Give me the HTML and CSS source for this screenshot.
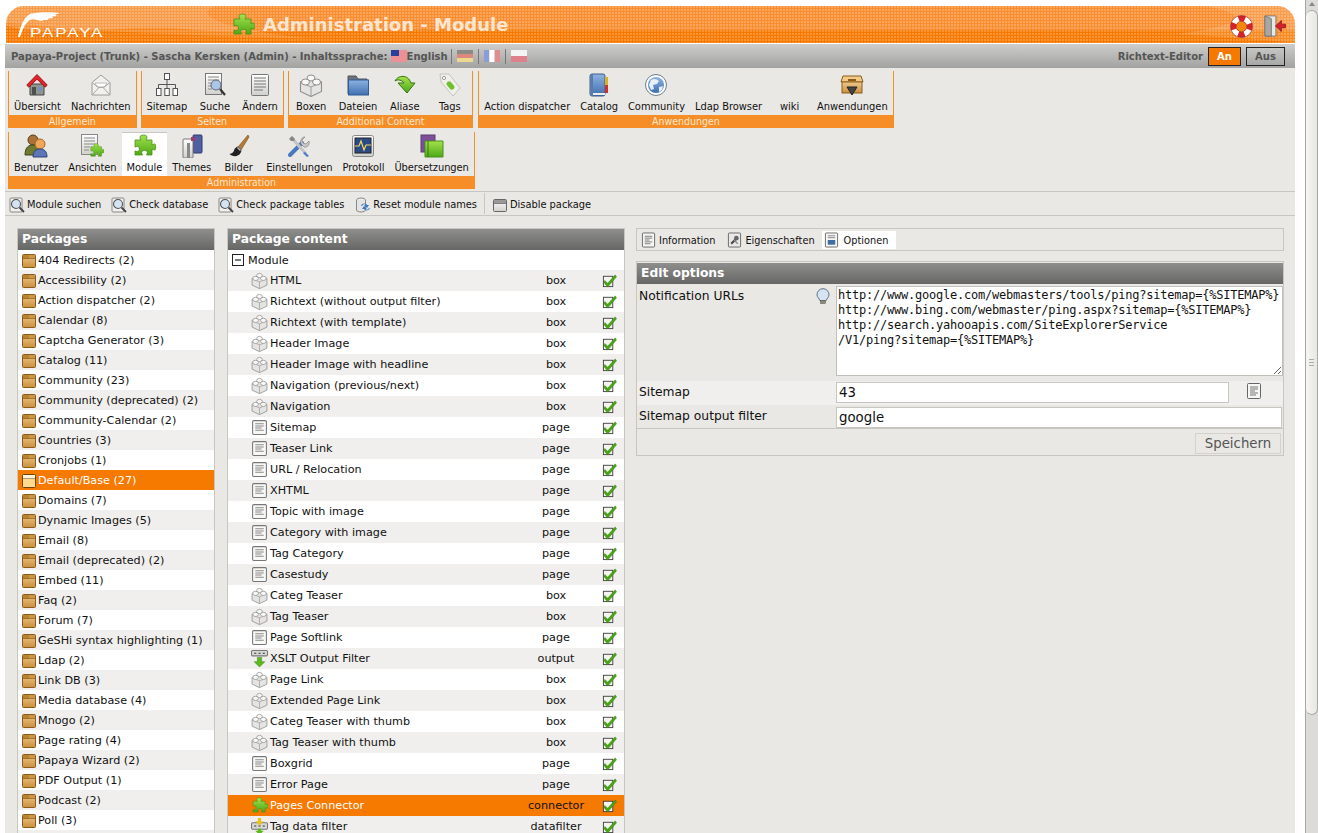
FILE: index.html
```html
<!DOCTYPE html>
<html lang="de">
<head>
<meta charset="utf-8">
<title>Administration - Module</title>
<link rel="stylesheet" href="styles.css">
</head>
<body>
<svg class="defs" aria-hidden="true">
<defs>
<linearGradient id="gGreen" x1="0" y1="0" x2="0" y2="1"><stop offset="0" stop-color="#a4e24e"/><stop offset="1" stop-color="#4ea816"/></linearGradient>
<linearGradient id="gPkg" x1="0" y1="0" x2="0" y2="1"><stop offset="0" stop-color="#efc98c"/><stop offset="1" stop-color="#c98f3e"/></linearGradient>
<linearGradient id="gGrey" x1="0" y1="0" x2="0" y2="1"><stop offset="0" stop-color="#ffffff"/><stop offset="1" stop-color="#d0d0cc"/></linearGradient>
<linearGradient id="gBlue" x1="0" y1="0" x2="0" y2="1"><stop offset="0" stop-color="#8db3e2"/><stop offset="1" stop-color="#3f6fb0"/></linearGradient>
<symbol id="puzzle" viewBox="0 0 24 24"><path d="M3 6h6c-.8-1-1-2-1-2.800C8 1.800 9.500 1 11.500 1s3.500.8 3.500 2.200c0 .8-.3 1.800-1 2.800h6v5c1-.7 1.800-1 2.500-1 .9 0 1.500 1.200 1.500 3s-.6 3-1.500 3c-.7 0-1.500-.3-2.500-1v6h-5.500c.6-1 .8-1.800.8-2.500 0-1.300-1.200-2-2.800-2s-2.800.7-2.800 2c0 .7.2 1.500.8 2.500H3v-4c1 .3 1.700.5 2.400.5 1.200 0 2-1 2-2.500s-.8-2.500-2-2.500c-.7 0-1.400.2-2.400.5z" fill="url(#gGreen)" stroke="#4b8f1a" stroke-width=".8"/></symbol>
<symbol id="home" viewBox="0 0 24 24"><path d="M5 11v11h14V11z" fill="#8f958f" stroke="#444"/><rect x="7" y="14" width="4" height="8" fill="#4d504d"/><rect x="13" y="14" width="4" height="4" fill="#7690c0"/><path d="M12 1.500 1.800 12l2 2.200L12 6.200l8.200 8 2-2.200z" fill="#e3242c" stroke="#9a141a" stroke-linejoin="round"/></symbol>
<symbol id="mail" viewBox="0 0 24 24"><path d="M3 9.500 12 2l9 7.500V22H3z" fill="#f2f1ee" stroke="#9a9a96"/><path d="M6 10h12l-2 4H8z" fill="#fff" stroke="#bbb"/><path d="M3.500 21.500 10 14.500h4l6.500 7M3.500 10 10 14.500M20.500 10 14 14.500" fill="none" stroke="#a8a8a4"/></symbol>
<symbol id="sitemap" viewBox="0 0 24 24" fill="#fff" stroke="#555" stroke-width="1"><rect x="9.500" y=".5" width="5" height="6"/><path d="M12 6.500v5M3.500 15v-3.500h17V15M12 11.500V15" fill="none"/><rect x="1.500" y="15.500" width="4.500" height="7"/><rect x="9.800" y="15.500" width="4.500" height="7"/><rect x="18" y="15.500" width="4.500" height="7"/></symbol>
<symbol id="pagesearch" viewBox="0 0 24 24"><rect x="2.500" y=".5" width="16" height="21" fill="url(#gGrey)" stroke="#777"/><path d="M5 4h11M5 7h11M5 10h4M5 13h4M5 16h4" stroke="#888"/><circle cx="13" cy="12" r="5" fill="#a9c6e8" stroke="#667"/><path d="m17 16 5 6" stroke="#333" stroke-width="2.200"/></symbol>
<symbol id="doc" viewBox="0 0 24 24"><rect x="3.500" y="1.500" width="17" height="21" rx="1" fill="url(#gGrey)" stroke="#777"/><path d="M6 5h12M6 8h12M6 11h12M6 14h12M6 17h9" stroke="#777"/></symbol>
<symbol id="lego" viewBox="0 0 24 24"><path d="M12 5 1.500 9v9.500L12 23.500l10.500-5V9z" fill="#e4e4e2" stroke="#8e8e8a" stroke-width="1.100"/><path d="M1.500 9.500 12 14l10.500-4.500M12 14v9.500" fill="none" stroke="#9c9c98"/><ellipse cx="12" cy="5" rx="4" ry="3" fill="#f8f8f8" stroke="#8e8e8a"/><ellipse cx="6.500" cy="9" rx="4" ry="3" fill="#f8f8f8" stroke="#8e8e8a"/><ellipse cx="17.500" cy="9" rx="4" ry="3" fill="#f8f8f8" stroke="#8e8e8a"/></symbol>
<symbol id="folder" viewBox="0 0 24 24"><path d="M2 3h8l2 3h9v15H2z" fill="#6b7380" stroke="#555"/><rect x="2.500" y="7" width="20" height="15" fill="url(#gBlue)" stroke="#2f5a96"/></symbol>
<symbol id="alias" viewBox="0 0 24 24"><path d="M2 8c3-6 13-7 16 2h4l-8 10-9-10h6C9 7 5 6 2 8z" fill="url(#gGreen)" stroke="#33730e"/></symbol>
<symbol id="tag" viewBox="0 0 24 24"><path d="M2 1h9l11 14-7 8L3 9z" fill="#f0efe9" stroke="#c4c4be"/><circle cx="6" cy="5" r="1.600" fill="#fff" stroke="#999"/><rect x="8" y="10" width="9" height="5" rx="2" transform="rotate(50 12.500 12.500)" fill="#6cc22c"/></symbol>
<symbol id="book" viewBox="0 0 24 24"><rect x="3" y="1" width="15" height="22" rx="2" fill="url(#gBlue)" stroke="#445e86"/><rect x="3" y="1" width="3" height="22" fill="#5b7bab"/><rect x="18" y="4" width="3" height="8" fill="#e0b020"/><rect x="18" y="12" width="3" height="8" fill="#d03030"/><rect x="6" y="20" width="12" height="2" fill="#eee"/></symbol>
<symbol id="globe" viewBox="0 0 24 24"><circle cx="12" cy="12" r="10.500" fill="#fff" stroke="#6c7c92"/><circle cx="12" cy="12" r="8" fill="url(#gBlue)"/><path d="M7 7c3-2 6-1 8 1l-2 3-4 1 1 4-3 1-2-5zM15 14l4-1-1 4-3 2z" fill="#e8eff8"/></symbol>
<symbol id="apps" viewBox="0 0 24 24"><path d="M3 3h18l2 6H1z" fill="#f2cb88" stroke="#8a5c18"/><rect x="2" y="9" width="20" height="11" fill="url(#gPkg)" stroke="#8a5c18"/><rect x="8" y="6" width="8" height="2" fill="#8a5c18"/><path d="M7 14h10l-5 8z" fill="#444" stroke="#222"/></symbol>
<symbol id="users" viewBox="0 0 24 24"><circle cx="9" cy="6" r="5" fill="#a8723a" stroke="#5c3c18"/><path d="M1 21c0-8 4-10 8-10s7 3 7 10z" fill="#6e7a30" stroke="#3c4418"/><circle cx="16" cy="10" r="5" fill="#f0a858" stroke="#a8642a"/><path d="M9 23c0-6 3-8 7-8s7 2 7 8z" fill="#5b77b8" stroke="#2d4478"/></symbol>
<symbol id="viewadd" viewBox="0 0 24 24"><rect x="1.500" y=".5" width="16" height="20" fill="url(#gGrey)" stroke="#888"/><path d="M4 4h11M4 7h11M4 10h11M4 13h6M4 16h5" stroke="#888"/><use href="#puzzle" x="9" y="9" width="15" height="15"/></symbol>
<symbol id="themes" viewBox="0 0 24 24"><rect x="13" y="1" width="9" height="18" rx="1" fill="#4f5f9f" stroke="#2e3a70"/><rect x="3" y="5" width="10" height="19" rx="1" fill="url(#gGrey)" stroke="#777"/><rect x="7" y="9" width="3" height="15" fill="#888"/><rect x="11" y="3" width="4" height="4" fill="#a03a6a"/></symbol>
<symbol id="brush" viewBox="0 0 24 24"><path d="M21 1 11 13l3 3L22 3z" fill="#b47a3a" stroke="#7a4c1c" stroke-width=".6"/><path d="M11 12.500c-2 .5-3.500 2-4 4-.4 2-2 3-4.500 3.500 3 3 9 3 11-1 1-1.500 1-3 .5-3.500z" fill="#222"/><path d="m11 13 3 3-1 1-3-3z" fill="#bbb"/></symbol>
<symbol id="tools" viewBox="0 0 24 24"><path d="m3 21 12-12" stroke="#4a78c0" stroke-width="4" stroke-linecap="round"/><path d="M14 10c-1-3 0-6 3-7l1 0-3 3 1 3 3 1 3-3c1 4-2 7-5 6z" fill="#c8c8c8" stroke="#777" stroke-width=".6"/><path d="m4 3 15 17" stroke="#c4c4c4" stroke-width="3"/><path d="M2 5l3-3 3 3-1 2H4z" fill="#888"/><path d="m18 18 4 4-2 1-4-4z" fill="#4a78c0"/></symbol>
<symbol id="monitor" viewBox="0 0 24 24"><rect x="1.500" y="1.500" width="21" height="21" rx="2" fill="url(#gGrey)" stroke="#888"/><rect x="4" y="4" width="16" height="15" fill="#2b4b86" stroke="#222"/><path d="M4 12h4l2-5 3 9 2-5h5" fill="none" stroke="#f4d860" stroke-width="1.200"/></symbol>
<symbol id="translate" viewBox="0 0 24 24"><rect x="1" y="1" width="14" height="17" fill="#7d4f9a" stroke="#5a3a70"/><path d="M5 7h18v16H5z" fill="url(#gGreen)" stroke="#4b8f1a"/><path d="M8 7v16" stroke="#2f7a0a"/></symbol>
<symbol id="lens" viewBox="0 0 16 16"><rect x="1" y="1" width="12" height="14" rx="1" fill="#f0f0ee" stroke="#888"/><circle cx="7" cy="7" r="4.500" fill="#d4e2f2" stroke="#555" stroke-width="1.100"/><path d="m10.500 10.500 4.500 4.500" stroke="#444" stroke-width="1.800"/></symbol>
<symbol id="reset" viewBox="0 0 16 16"><ellipse cx="6" cy="3" rx="4.500" ry="2" fill="#eee" stroke="#888"/><path d="M1.500 3v10c0 1.200 2 2 4.500 2s4.500-.8 4.500-2V3" fill="#e4e4e2" stroke="#888"/><path d="M6 9c1-3 5-3 6-1h2l-2 3-3-3h2c-1-1-3-1-4 1zM15 11c-1 3-5 3-6 1H7l2-3 3 3h-2c1 1 3 1 4-1z" fill="#3a78c8"/></symbol>
<symbol id="grey-pkg" viewBox="0 0 16 16"><rect x="1.500" y="2.500" width="13" height="12" rx="1" fill="url(#gGrey)" stroke="#666"/><path d="M1.500 6.500h13" stroke="#666"/><rect x="2" y="3" width="12" height="3.500" fill="#999"/></symbol>
<symbol id="pkg" viewBox="0 0 16 16"><rect x="1.500" y="1.500" width="13" height="13" rx="1" fill="url(#gPkg)" stroke="#8a5c18"/><path d="M1.500 5.500h13M8 1.500v4" stroke="#8a5c18"/><rect x="2" y="2" width="6" height="3.500" fill="#b88434"/><rect x="8" y="2" width="6" height="3.500" fill="#c9964a"/></symbol>
<symbol id="pkgopen" viewBox="0 0 16 16"><rect x="1.500" y="1.500" width="13" height="13" rx="1" fill="#ffd98e" stroke="#6a4410"/><path d="M1.500 5.500h13" stroke="#6a4410"/><rect x="2" y="2" width="12" height="3.500" fill="#fff3d8"/></symbol>
<symbol id="page" viewBox="0 0 16 16"><rect x="1.500" y="1.500" width="13" height="13" rx="1" fill="#f8f8f6" stroke="#777"/><path d="M4 4.500h8M4 6.500h8M4 8.500h6M4 10.500h8" stroke="#888"/></symbol>
<symbol id="output" viewBox="0 0 16 16"><rect x=".5" y=".5" width="15" height="5" rx="1" fill="#d8d8d6" stroke="#777"/><path d="M3 3h2M7 3h2M11 3h2" stroke="#333"/><path d="M6 7h4v4h3l-5 5-5-5h3z" fill="#5cb81e" stroke="#3f8a10" stroke-width=".5"/></symbol>
<symbol id="datafilter" viewBox="0 0 16 16"><rect x=".5" y="4.500" width="15" height="6" rx="1" fill="#d8d8d6" stroke="#777"/><path d="M3 7.500h2M7 7.500h2M11 7.500h2" stroke="#333"/><path d="M6.500 0h3v3H12l-4 4-4-4h2.500z" fill="#e8c020"/><path d="M6.500 10h3v2H12l-4 4-4-4h2.500z" fill="#5cb81e"/></symbol>
<symbol id="check" viewBox="0 0 16 16"><rect x="1.500" y="3.500" width="10" height="11" fill="#f4f4f0" stroke="#444"/><path d="M3 8l3 3 8-9 1.500 2-9.500 11-4-5z" fill="#4aa516" stroke="#2e7a06" stroke-width=".5"/></symbol>
<symbol id="minus" viewBox="0 0 12 12"><rect x=".5" y=".5" width="11" height="11" fill="#fff" stroke="#222"/><path d="M3 6h6" stroke="#222" stroke-width="1.200"/></symbol>
<symbol id="tabinfo" viewBox="0 0 16 16"><rect x="1.500" y=".5" width="13" height="15" rx="1" fill="#f6f6f4" stroke="#666"/><path d="M4 4h8M4 6h8M4 8h5M4 10h8M4 12h6" stroke="#777"/></symbol>
<symbol id="tabprops" viewBox="0 0 16 16"><rect x="1.500" y=".5" width="13" height="15" rx="1" fill="#e8e8e6" stroke="#666"/><path d="m4.500 12 5-5" stroke="#444" stroke-width="2.200"/><circle cx="10" cy="6" r="2.500" fill="#666"/><path d="m7.500 8 4 4" stroke="#888" stroke-width="1.500"/></symbol>
<symbol id="tabopts" viewBox="0 0 16 16"><rect x="1.500" y=".5" width="13" height="15" rx="1" fill="#f6f6f4" stroke="#666"/><path d="M4 3.500h8M4 5.500h8" stroke="#888"/><rect x="4" y="8" width="8" height="5" fill="#3f6f9f"/></symbol>
<symbol id="bulb" viewBox="0 0 16 16"><path d="M8 .7a6 6 0 0 0-6 6c0 2.500 2 3.500 3 6h6c1-2.500 3-3.500 3-6a6 6 0 0 0-6-6z" fill="#d6e4f2" stroke="#5a7088"/><rect x="5.500" y="12.500" width="5" height="3" fill="#8a8a70" stroke="#555" stroke-width=".5"/></symbol>
<symbol id="ring" viewBox="0 0 24 24"><circle cx="12" cy="12" r="8.500" fill="none" stroke="#fff" stroke-width="6"/><circle cx="12" cy="12" r="8.500" fill="none" stroke="#d8222a" stroke-width="6" stroke-dasharray="6.700 6.650" stroke-dashoffset="3.300"/><circle cx="12" cy="12" r="11.500" fill="none" stroke="#8a2020" stroke-width=".6"/><circle cx="12" cy="12" r="5.500" fill="#f3860f" stroke="#8a2020" stroke-width=".6"/></symbol>
<symbol id="door" viewBox="0 0 24 24"><path d="M1 1h12v22H1z" fill="#e8e8e4" stroke="#777"/><path d="M1 1l7 3v19H1z" fill="#a8a8a2" stroke="#777"/><path d="M23.500 10H19V6l-6.500 6 6.500 6v-4h4.500z" fill="#d8202a" stroke="#8a1016" stroke-width=".8"/></symbol>
<symbol id="us" viewBox="0 0 16 12"><rect width="16" height="12" fill="#fff"/><path d="M0 1h16M0 3h16M0 5h16M0 7h16M0 9h16M0 11h16" stroke="#d8222a"/><rect width="8" height="6" fill="#2a3f9a"/></symbol>
<symbol id="de" viewBox="0 0 16 12"><rect width="16" height="4" fill="#8b8a86"/><rect y="4" width="16" height="4" fill="#dc8a80"/><rect y="8" width="16" height="4" fill="#ecd890"/></symbol>
<symbol id="fr" viewBox="0 0 16 12"><rect width="5.300" height="12" fill="#8c9cd6"/><rect x="5.300" width="5.400" height="12" fill="#fff"/><rect x="10.700" width="5.300" height="12" fill="#e08c90"/></symbol>
<symbol id="pl" viewBox="0 0 16 12"><rect width="16" height="6" fill="#f4f4f4"/><rect y="6" width="16" height="6" fill="#e0808c"/></symbol>
</defs>
</svg>

<div class="page">
  <header class="top">
    <svg class="swoosh" viewBox="0 0 1289 37" preserveAspectRatio="none" aria-hidden="true"><path d="M0 20C60 34 120 16 190 24 240 28 400 23 560 24H1289V37H0z" fill="#f57800"/><path d="M0 0H210C180 10 230 26 310 33 210 30 70 26 0 16z" fill="#fff" opacity=".12"/><path d="M1289 0H1200C1240 8 1250 18 1170 28 1210 30 1250 33 1289 37z" fill="#fff" opacity=".14"/></svg>
    <div class="logo">
      <svg class="feather" viewBox="0 0 44 28" aria-hidden="true"><path d="M1 26C3 17 6 7 13 3 20 1 34 1 43 2L38 3.500 40 5 35 5.500 36 7 31 7.500 31 9 26 9 25 10 20 9C13 7 9 9 3 26z" fill="#fff"/></svg>
      <span class="logo-text">PAPAYA</span>
    </div>
    <svg class="title-icon"><use href="#puzzle"/></svg>
    <h1 class="title">Administration - Module</h1>
    <div class="top-actions">
      <svg class="ring-icon"><use href="#ring"/></svg>
      <svg class="door-icon"><use href="#door"/></svg>
    </div>
  </header>

  <div class="status">
    <span>Papaya-Project (Trunk) - Sascha Kersken (Admin) - Inhaltssprache:</span>
    <svg class="flag flag-first"><use href="#us"/></svg><span>English</span>
    <i class="flag-sep"></i><svg class="flag"><use href="#de"/></svg>
    <i class="flag-sep"></i><svg class="flag"><use href="#fr"/></svg>
    <i class="flag-sep"></i><svg class="flag"><use href="#pl"/></svg>
    <span class="rte-label">Richtext-Editor</span>
    <span class="rte rte-on">An</span>
    <span class="rte rte-off">Aus</span>
  </div>

  <div class="content">
    <nav class="menu-row">
      <section class="group">
        <div class="btns">
          <a class="btn"><svg class="mi"><use href="#home"/></svg>Übersicht</a>
          <a class="btn"><svg class="mi"><use href="#mail"/></svg>Nachrichten</a>
        </div>
        <div class="group-name">Allgemein</div>
      </section>
      <section class="group">
        <div class="btns">
          <a class="btn"><svg class="mi"><use href="#sitemap"/></svg>Sitemap</a>
          <a class="btn"><svg class="mi"><use href="#pagesearch"/></svg>Suche</a>
          <a class="btn"><svg class="mi"><use href="#doc"/></svg>Ändern</a>
        </div>
        <div class="group-name">Seiten</div>
      </section>
      <section class="group">
        <div class="btns">
          <a class="btn"><svg class="mi"><use href="#lego"/></svg>Boxen</a>
          <a class="btn"><svg class="mi"><use href="#folder"/></svg>Dateien</a>
          <a class="btn"><svg class="mi"><use href="#alias"/></svg>Aliase</a>
          <a class="btn"><svg class="mi"><use href="#tag"/></svg>Tags</a>
        </div>
        <div class="group-name">Additional Content</div>
      </section>
      <section class="group group-apps">
        <div class="btns">
          <a class="btn"><span class="mi"></span>Action dispatcher</a>
          <a class="btn"><svg class="mi"><use href="#book"/></svg>Catalog</a>
          <a class="btn"><svg class="mi"><use href="#globe"/></svg>Community</a>
          <a class="btn"><span class="mi"></span>Ldap Browser</a>
          <a class="btn"><span class="mi"></span>wiki</a>
          <a class="btn"><svg class="mi"><use href="#apps"/></svg>Anwendungen</a>
        </div>
        <div class="group-name">Anwendungen</div>
      </section>
    </nav>
    <nav class="menu-row menu-row-2">
      <section class="group">
        <div class="btns">
          <a class="btn"><svg class="mi"><use href="#users"/></svg>Benutzer</a>
          <a class="btn"><svg class="mi"><use href="#viewadd"/></svg>Ansichten</a>
          <a class="btn btn-active"><svg class="mi"><use href="#puzzle"/></svg>Module</a>
          <a class="btn"><svg class="mi"><use href="#themes"/></svg>Themes</a>
          <a class="btn"><svg class="mi"><use href="#brush"/></svg>Bilder</a>
          <a class="btn"><svg class="mi"><use href="#tools"/></svg>Einstellungen</a>
          <a class="btn"><svg class="mi"><use href="#monitor"/></svg>Protokoll</a>
          <a class="btn"><svg class="mi"><use href="#translate"/></svg>Übersetzungen</a>
        </div>
        <div class="group-name">Administration</div>
      </section>
    </nav>

    <div class="actions">
      <a class="act"><svg class="si"><use href="#lens"/></svg>Module suchen</a>
      <a class="act"><svg class="si"><use href="#lens"/></svg>Check database</a>
      <a class="act"><svg class="si"><use href="#lens"/></svg>Check package tables</a>
      <a class="act act-reset"><svg class="si"><use href="#reset"/></svg>Reset module names</a>
      <i class="act-sep"></i>
      <a class="act"><svg class="si"><use href="#grey-pkg"/></svg>Disable package</a>
    </div>

    <div class="columns">
      <section class="panel col-left">
        <h2 class="panel-head">Packages</h2>
        <ul class="pkg-list">
          <li><svg class="si"><use href="#pkg"/></svg>404 Redirects (2)</li>
          <li><svg class="si"><use href="#pkg"/></svg>Accessibility (2)</li>
          <li><svg class="si"><use href="#pkg"/></svg>Action dispatcher (2)</li>
          <li><svg class="si"><use href="#pkg"/></svg>Calendar (8)</li>
          <li><svg class="si"><use href="#pkg"/></svg>Captcha Generator (3)</li>
          <li><svg class="si"><use href="#pkg"/></svg>Catalog (11)</li>
          <li><svg class="si"><use href="#pkg"/></svg>Community (23)</li>
          <li><svg class="si"><use href="#pkg"/></svg>Community (deprecated) (2)</li>
          <li><svg class="si"><use href="#pkg"/></svg>Community-Calendar (2)</li>
          <li><svg class="si"><use href="#pkg"/></svg>Countries (3)</li>
          <li><svg class="si"><use href="#pkg"/></svg>Cronjobs (1)</li>
          <li class="sel"><svg class="si"><use href="#pkgopen"/></svg>Default/Base (27)</li>
          <li><svg class="si"><use href="#pkg"/></svg>Domains (7)</li>
          <li><svg class="si"><use href="#pkg"/></svg>Dynamic Images (5)</li>
          <li><svg class="si"><use href="#pkg"/></svg>Email (8)</li>
          <li><svg class="si"><use href="#pkg"/></svg>Email (deprecated) (2)</li>
          <li><svg class="si"><use href="#pkg"/></svg>Embed (11)</li>
          <li><svg class="si"><use href="#pkg"/></svg>Faq (2)</li>
          <li><svg class="si"><use href="#pkg"/></svg>Forum (7)</li>
          <li><svg class="si"><use href="#pkg"/></svg>GeSHi syntax highlighting (1)</li>
          <li><svg class="si"><use href="#pkg"/></svg>Ldap (2)</li>
          <li><svg class="si"><use href="#pkg"/></svg>Link DB (3)</li>
          <li><svg class="si"><use href="#pkg"/></svg>Media database (4)</li>
          <li><svg class="si"><use href="#pkg"/></svg>Mnogo (2)</li>
          <li><svg class="si"><use href="#pkg"/></svg>Page rating (4)</li>
          <li><svg class="si"><use href="#pkg"/></svg>Papaya Wizard (2)</li>
          <li><svg class="si"><use href="#pkg"/></svg>PDF Output (1)</li>
          <li><svg class="si"><use href="#pkg"/></svg>Podcast (2)</li>
          <li><svg class="si"><use href="#pkg"/></svg>Poll (3)</li>
          <li></li>
        </ul>
      </section>

      <section class="panel col-mid">
        <h2 class="panel-head">Package content</h2>
        <div class="tree-root"><svg class="minus"><use href="#minus"/></svg>Module</div>
        <ul class="mod-list">
          <li><svg class="mod-ic"><use href="#lego"/></svg><span class="mod-name">HTML</span><span class="mod-type">box</span><svg class="chk"><use href="#check"/></svg></li>
          <li><svg class="mod-ic"><use href="#lego"/></svg><span class="mod-name">Richtext (without output filter)</span><span class="mod-type">box</span><svg class="chk"><use href="#check"/></svg></li>
          <li><svg class="mod-ic"><use href="#lego"/></svg><span class="mod-name">Richtext (with template)</span><span class="mod-type">box</span><svg class="chk"><use href="#check"/></svg></li>
          <li><svg class="mod-ic"><use href="#lego"/></svg><span class="mod-name">Header Image</span><span class="mod-type">box</span><svg class="chk"><use href="#check"/></svg></li>
          <li><svg class="mod-ic"><use href="#lego"/></svg><span class="mod-name">Header Image with headline</span><span class="mod-type">box</span><svg class="chk"><use href="#check"/></svg></li>
          <li><svg class="mod-ic"><use href="#lego"/></svg><span class="mod-name">Navigation (previous/next)</span><span class="mod-type">box</span><svg class="chk"><use href="#check"/></svg></li>
          <li><svg class="mod-ic"><use href="#lego"/></svg><span class="mod-name">Navigation</span><span class="mod-type">box</span><svg class="chk"><use href="#check"/></svg></li>
          <li><svg class="mod-ic"><use href="#page"/></svg><span class="mod-name">Sitemap</span><span class="mod-type">page</span><svg class="chk"><use href="#check"/></svg></li>
          <li><svg class="mod-ic"><use href="#page"/></svg><span class="mod-name">Teaser Link</span><span class="mod-type">page</span><svg class="chk"><use href="#check"/></svg></li>
          <li><svg class="mod-ic"><use href="#page"/></svg><span class="mod-name">URL / Relocation</span><span class="mod-type">page</span><svg class="chk"><use href="#check"/></svg></li>
          <li><svg class="mod-ic"><use href="#page"/></svg><span class="mod-name">XHTML</span><span class="mod-type">page</span><svg class="chk"><use href="#check"/></svg></li>
          <li><svg class="mod-ic"><use href="#page"/></svg><span class="mod-name">Topic with image</span><span class="mod-type">page</span><svg class="chk"><use href="#check"/></svg></li>
          <li><svg class="mod-ic"><use href="#page"/></svg><span class="mod-name">Category with image</span><span class="mod-type">page</span><svg class="chk"><use href="#check"/></svg></li>
          <li><svg class="mod-ic"><use href="#page"/></svg><span class="mod-name">Tag Category</span><span class="mod-type">page</span><svg class="chk"><use href="#check"/></svg></li>
          <li><svg class="mod-ic"><use href="#page"/></svg><span class="mod-name">Casestudy</span><span class="mod-type">page</span><svg class="chk"><use href="#check"/></svg></li>
          <li><svg class="mod-ic"><use href="#lego"/></svg><span class="mod-name">Categ Teaser</span><span class="mod-type">box</span><svg class="chk"><use href="#check"/></svg></li>
          <li><svg class="mod-ic"><use href="#lego"/></svg><span class="mod-name">Tag Teaser</span><span class="mod-type">box</span><svg class="chk"><use href="#check"/></svg></li>
          <li><svg class="mod-ic"><use href="#page"/></svg><span class="mod-name">Page Softlink</span><span class="mod-type">page</span><svg class="chk"><use href="#check"/></svg></li>
          <li><svg class="mod-ic"><use href="#output"/></svg><span class="mod-name">XSLT Output Filter</span><span class="mod-type">output</span><svg class="chk"><use href="#check"/></svg></li>
          <li><svg class="mod-ic"><use href="#lego"/></svg><span class="mod-name">Page Link</span><span class="mod-type">box</span><svg class="chk"><use href="#check"/></svg></li>
          <li><svg class="mod-ic"><use href="#lego"/></svg><span class="mod-name">Extended Page Link</span><span class="mod-type">box</span><svg class="chk"><use href="#check"/></svg></li>
          <li><svg class="mod-ic"><use href="#lego"/></svg><span class="mod-name">Categ Teaser with thumb</span><span class="mod-type">box</span><svg class="chk"><use href="#check"/></svg></li>
          <li><svg class="mod-ic"><use href="#lego"/></svg><span class="mod-name">Tag Teaser with thumb</span><span class="mod-type">box</span><svg class="chk"><use href="#check"/></svg></li>
          <li><svg class="mod-ic"><use href="#page"/></svg><span class="mod-name">Boxgrid</span><span class="mod-type">page</span><svg class="chk"><use href="#check"/></svg></li>
          <li><svg class="mod-ic"><use href="#page"/></svg><span class="mod-name">Error Page</span><span class="mod-type">page</span><svg class="chk"><use href="#check"/></svg></li>
          <li class="sel"><svg class="mod-ic"><use href="#puzzle"/></svg><span class="mod-name">Pages Connector</span><span class="mod-type">connector</span><svg class="chk"><use href="#check"/></svg></li>
          <li><svg class="mod-ic"><use href="#datafilter"/></svg><span class="mod-name">Tag data filter</span><span class="mod-type">datafilter</span><svg class="chk"><use href="#check"/></svg></li>
        </ul>
      </section>

      <div class="col-right">
        <div class="tabs">
          <a class="tab"><svg class="tab-ic"><use href="#tabinfo"/></svg>Information</a>
          <a class="tab"><svg class="tab-ic"><use href="#tabprops"/></svg>Eigenschaften</a>
          <a class="tab tab-active"><svg class="tab-ic"><use href="#tabopts"/></svg>Optionen</a>
        </div>
        <form class="panel opts">
          <h2 class="panel-head">Edit options</h2>
          <div class="field field-ta">
            <label class="field-label">Notification URLs</label>
            <svg class="bulb"><use href="#bulb"/></svg>
            <textarea class="ta" spellcheck="false">http://www.google.com/webmasters/tools/ping?sitemap={%SITEMAP%}
http://www.bing.com/webmaster/ping.aspx?sitemap={%SITEMAP%}
http://search.yahooapis.com/SiteExplorerService
/V1/ping?sitemap={%SITEMAP%}</textarea>
          </div>
          <div class="field field-alt">
            <label class="field-label">Sitemap</label>
            <input class="inp inp-short" value="43">
            <svg class="pick"><use href="#tabinfo"/></svg>
          </div>
          <div class="field field-last">
            <label class="field-label">Sitemap output filter</label>
            <input class="inp inp-long" value="google">
          </div>
          <div class="submit-row"><button type="button" class="save">Speichern</button></div>
        </form>
      </div>
    </div>
  </div>
</div>

<div class="vscroll" aria-hidden="true">
  <div class="vs-up"></div>
  <div class="vs-thumb"><span class="vs-grip"></span></div>
</div>
</body>
</html>
```

FILE: styles.css
```css
* { box-sizing: border-box; }
html, body { margin: 0; height: 833px; overflow: hidden; background: #fff; }
body { display: flex; font: 11.2px "DejaVu Sans", sans-serif; color: #111; }
ul { list-style: none; margin: 0; padding: 0; }
svg { display: block; flex: none; }
.defs { position: absolute; width: 0; height: 0; }

.page { width: 1305px; height: 833px; padding: 6px 10px 0 5px; overflow: hidden; flex: none; }

/* header */
.top { position: relative; margin-left: 1px; height: 37px; display: flex; align-items: center; overflow: hidden;
  border-radius: 18px 18px 0 0; background: #f88e30; }
.top::after { content: ""; position: absolute; inset: 0;
  background: radial-gradient(circle at 1px 1px, rgba(255,255,255,.22) .7px, transparent 1px) 0 0 / 3px 3px; }
.swoosh { position: absolute; inset: 0; width: 100%; height: 100%; }
.logo { position: relative; z-index: 1; width: 224px; height: 37px; padding: 20px 0 0 24px; }
.feather { position: absolute; left: 11px; top: 5px; width: 44px; height: 28px; }
.logo-text { display: block; transform: scaleX(1.3); transform-origin: left top; font: 13px/14px "Liberation Sans", sans-serif; letter-spacing: 1.5px; color: #fff; }
.title-icon { position: relative; z-index: 1; width: 24px; height: 24px; margin: 0 8px 0 1px; }
.title { position: relative; z-index: 1; margin: 0; font: bold 18px "DejaVu Sans", sans-serif; color: #fde6d0; }
.top-actions { position: relative; z-index: 1; margin-left: auto; padding: 3px 9px 0 0; display: flex; gap: 11px; }
.ring-icon { width: 23px; height: 23px; }
.door-icon { width: 22px; height: 22px; }

/* status bar */
.status { height: 24px; margin-top: 1px; padding: 0 10px 0 6px; display: flex; align-items: center;
  background: linear-gradient(#cdcdcb, #a2a2a0); color: #555; font: bold 11.15px "DejaVu Sans Condensed", "DejaVu Sans", sans-serif; }
.flag { width: 16px; height: 12px; margin: 0 4px 0 6px; }
.flag-first { margin: 0 0 0 3px; }
.flag-sep { width: 1px; height: 15px; margin-left: 3px; background: #777; }
.flag-sep + .flag { margin-left: 5px; margin-right: 2px; }
.rte-label { margin-left: auto; margin-right: 5px; }
.rte { height: 19px; line-height: 17px; text-align: center; border: 1px solid #222; }
.rte-on { width: 33px; background: #f57800; color: #fff; }
.rte-off { width: 39px; margin-left: 5px; }

/* menus */
.content { background: #eae8e4; height: 765px; }
.menu-row { display: flex; gap: 4px; padding: 3px 0 0 3px; }
.menu-row-2 { padding-top: 4px; }
.group { border: solid #f78d26; border-width: 0 1px 1px 1px; height: 57px; display: flex; flex-direction: column; }
.group-apps { margin-left: 1px; }
.btns { flex: 1; display: flex; }
.btn { min-width: 45px; padding: 2px 5px 0; display: flex; flex-direction: column; align-items: center;
  font: 11px "DejaVu Sans Condensed", "DejaVu Sans", sans-serif; line-height: 15px; letter-spacing: -.03px; color: #111; }
.menu-row-2 .btn { letter-spacing: -.06px; }
.btn-active { background: #fff; box-shadow: inset 0 1px #c8c6c0; }
.mi { display: block; width: 24px; height: 24px; margin-bottom: 2px; flex: none; }
.group-name { height: 12px; background: #f78d26; color: #ffe8d0; text-align: center;
  font: 10.500px/12px "DejaVu Sans Condensed", "DejaVu Sans", sans-serif; }

.actions { margin-top: 2px; height: 25px; border-top: 1px solid #c8c6c0; border-bottom: 1px solid #c8c6c0;
  padding: 2px 0 0 4px; display: flex; align-items: center; gap: 10px;
  font: 10.95px "DejaVu Sans Condensed", "DejaVu Sans", sans-serif; }
.act { display: flex; align-items: center; gap: 2px; }
.act-reset { margin-left: 1px; }
.si { width: 16px; height: 16px; }
.act-sep { width: 1px; height: 21px; background: #c8c6c0; margin: -2px -3px 0 -3px; }

/* columns */
.columns { display: flex; align-items: flex-start; padding: 12px 0 0 12px; }
.panel { border: 1px solid #c8c6c0; background: #fff; }
.col-left { width: 198px; height: 700px; }
.col-mid { width: 398px; height: 700px; margin: 0 11px 0 12px; }
.col-right { width: 648px; }
.panel-head { margin: 0; height: 21px; padding-left: 4px; font: bold 12.3px/20px "DejaVu Sans", sans-serif; color: #fff;
  background: linear-gradient(#8e8e8c, #666664); }

.pkg-list li { height: 20px; display: flex; align-items: center; gap: 1px; padding: 1px 0 0 3px; white-space: nowrap; }
.pkg-list li:nth-child(even) { background: #f0efed; }
.pkg-list li.sel, .mod-list li.sel { background: #f67900; color: #fff; }

.tree-root { height: 20px; display: flex; align-items: center; gap: 4px; padding-left: 4px; }
.minus { width: 12px; height: 12px; }
.mod-list li { height: 21px; display: flex; align-items: center; padding-left: 23px; white-space: nowrap; }
.mod-list li:nth-child(odd) { background: #f0efed; }
.mod-list li.sel { background: #f67900; }
.mod-ic { width: 17px; height: 17px; margin-right: 2px; }
.mod-name { width: 235px; }
.mod-type { width: 102px; text-align: center; color: #111; }
.chk { width: 15px; height: 15px; margin-left: -5px; }

/* right */
.tabs { height: 23px; border: 1px solid #c8c6c0; display: flex; align-items: stretch; padding: 2px 0 1px 4px; gap: 10px;
  font: 10.85px "DejaVu Sans Condensed", "DejaVu Sans", sans-serif; }
.tab { display: flex; align-items: center; gap: 3px; padding: 0 2px 0 0; }
.tab-active { background: #fff; padding: 0 8px 0 2px; margin-left: -5px; gap: 5px; }
.tab-ic { width: 15px; height: 16px; }
.opts { margin-top: 10px; height: 195px; background: #eae8e4; padding-top: 1px; }
.field { display: flex; align-items: flex-start; position: relative; }
.field-label { width: 180px; padding: 3px 0 0 2px; line-height: 16px; font-size: 12.3px; }
.field-ta { height: 97px; padding-top: 1px; }
.bulb { width: 16px; height: 18px; margin: 3px 0 0 -2px; position: absolute; left: 180px; top: 0; }
.ta { width: 447px; height: 90px; margin: 1px 0 0 19px; padding: 1px 1px; border: 1px solid #c0bfba; background: #fff;
  font: 12px/15px "DejaVu Sans Mono", monospace; letter-spacing: -.22px; color: #111; white-space: pre; overflow: hidden; }
.field-alt { background: #f0efed; height: 24px; }
.field-last { height: 24px; border-bottom: 1px solid #c8c6c0; }
.inp { height: 21px; padding: 1px 2px; border: 1px solid #c8c6c0; background: #fff; font: 13.330px "DejaVu Sans", sans-serif; color: #111; margin: 1px 0 0 19px; }
.inp-short { width: 393px; }
.inp-long { width: 446px; margin-top: 2px; }
.pick { width: 16px; height: 16px; margin: 2px 0 0 17px; }
.submit-row { display: flex; justify-content: flex-end; padding: 4px 2px 0 0; }
.save { width: 86px; height: 21px; padding: 0; border: 1px solid #d4d2cc; background: #eae8e4; color: #555; font: 13.330px "DejaVu Sans", sans-serif; }

/* scrollbar */
.vscroll { width: 13px; height: 833px; flex: none; background: #dcdbd9; border-left: 1px solid #a8a8a6; position: relative; }
.vs-up { height: 9px; position: relative; }
.vs-up::before { content: ""; position: absolute; left: 3px; top: 2px; border: 3px solid transparent; border-top: 0; border-bottom: 4px solid #888; }
.vs-thumb { height: 705px; margin-top: 1px; border: 1px solid #a8a8a6; border-left: 0; border-radius: 6px 6px 6px 6px;
  background: linear-gradient(90deg, #f6f5f3, #e8e7e4); display: flex; align-items: center; justify-content: center; }
.vs-grip { width: 5px; height: 7px; border-top: 1px solid #aaa; border-bottom: 1px solid #aaa; background: linear-gradient(#aaa,#aaa) 0 2px / 5px 1px no-repeat; }
```
